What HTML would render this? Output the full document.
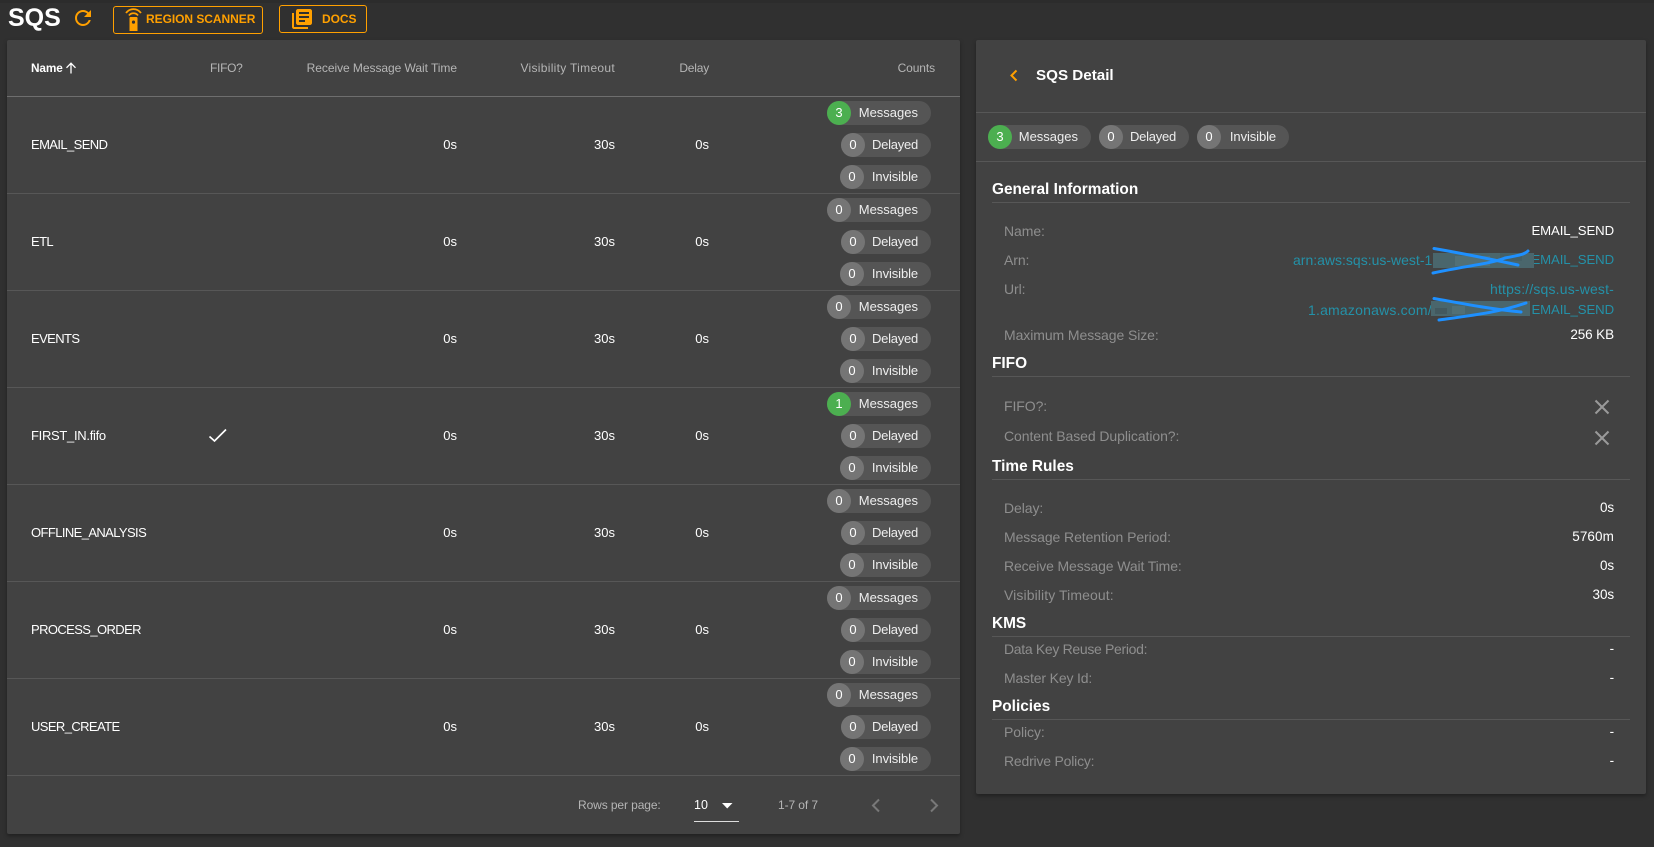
<!DOCTYPE html>
<html><head><meta charset="utf-8"><title>SQS</title>
<style>
html,body{margin:0;padding:0;background:#303030;width:1654px;height:847px;overflow:hidden;font-family:"Liberation Sans",Arial,sans-serif;color:#fff}
.p{position:absolute;background:#424242;border-radius:2px;box-shadow:0 2px 4px rgba(0,0,0,.35)}
.t{position:absolute;white-space:nowrap;line-height:20px;height:20px;font-size:13px}
.h{font-size:12px;color:#b5b5b5;letter-spacing:-.1px}
.n{letter-spacing:-.6px}
.l{font-size:14px;color:#8e8e8e;letter-spacing:-.08px}
.v{font-size:13.5px;letter-spacing:-.1px}
.a{color:#2491a8;font-size:14px;letter-spacing:-.1px}
.s{font-size:15.4px;font-weight:bold}
.d{position:absolute;height:1px;background:#575757}
.c{position:absolute;height:24px;border-radius:12px;background:#555;font-size:13px;line-height:24px}
.c i{position:absolute;left:0;top:0;width:24px;height:24px;border-radius:12px;background:#757575;font-style:normal;text-align:center}
.c i.g{background:#4caf50}
.c b{position:absolute;right:13px;top:0;font-weight:normal;color:#eee}
.c b.y{letter-spacing:-.25px}
.c b.z{letter-spacing:-.1px}
.btn{position:absolute;border:1px solid #ffa000;border-radius:3px;box-sizing:border-box}
.o{color:#ffa000;font-size:12px;font-weight:bold;letter-spacing:-.05px}
.r{position:absolute}
svg{position:absolute;overflow:visible}
</style></head><body>
<div style="position:absolute;left:0;top:0;width:1654px;height:3px;background:#2c2c2c"></div>
<div class="t" style="left:8px;top:3px;font-size:25px;line-height:30px;height:30px;font-weight:bold">SQS</div>
<svg style="left:71px;top:6px" width="24" height="24" viewBox="0 0 24 24"><path fill="#ffa000" d="M17.65 6.35C16.2 4.9 14.21 4 12 4c-4.42 0-7.99 3.58-7.99 8s3.57 8 7.99 8c3.73 0 6.84-2.55 7.73-6h-2.08c-.82 2.33-3.04 4-5.65 4-3.31 0-6-2.69-6-6s2.69-6 6-6c1.66 0 3.14.69 4.22 1.78L13 11h7V4l-2.35 2.35z"/></svg>
<div class="btn" style="left:113px;top:6px;width:150px;height:28px"></div>
<svg style="left:110px;top:0" width="60" height="40" viewBox="0 0 60 40"><path fill="none" stroke="#ffa000" stroke-width="1.8" d="M16 13C20 7.800 27 7.800 31 13"/><path fill="none" stroke="#ffa000" stroke-width="1.8" d="M19 15.500C21 12.500 26 12.500 28 15.500"/><path fill="#ffa000" fill-rule="evenodd" d="M20.500 17h6a1 1 0 0 1 1 1v13h-8V18a1 1 0 0 1 1-1zm3 3.500a1.600 1.600 0 1 0 0 3.200 1.600 1.600 0 0 0 0-3.200z"/></svg>
<div class="t o" style="left:146px;top:9px">REGION SCANNER</div>
<div class="btn" style="left:279px;top:5px;width:88px;height:28px"></div>
<svg style="left:290px;top:7px" width="24" height="24" viewBox="0 0 24 24"><path fill="#ffa000" d="M4 6H2v14c0 1.100.9 2 2 2h14v-2H4V6zm16-4H8c-1.100 0-2 .9-2 2v12c0 1.100.9 2 2 2h12c1.100 0 2-.9 2-2V4c0-1.100-.9-2-2-2zm-1 9H9V9h10v2zm-4 4H9v-2h6v2zm4-8H9V5h10v2z"/></svg>
<div class="t o" style="left:322px;top:9px">DOCS</div>

<!-- left panel -->
<div class="p" style="left:7px;top:40px;width:953px;height:794px"></div>
<div class="t h" style="left:31px;top:58px;color:#fff;font-weight:bold;font-size:11.8px">Name</div>
<svg style="left:65px;top:61px" width="12" height="14" viewBox="0 0 12 14"><path fill="none" stroke="#fff" stroke-width="1.300" d="M6 12.500V2.500M1.500 6.800 6 2.200l4.500 4.600"/></svg>
<div class="t h" style="left:210px;top:58px;letter-spacing:-.3px">FIFO?</div>
<div class="t h" style="right:1197px;top:58px;letter-spacing:-.05px">Receive Message Wait Time</div>
<div class="t h" style="right:1039px;top:58px;letter-spacing:.3px">Visibility Timeout</div>
<div class="t h" style="right:945px;top:58px;letter-spacing:-.2px">Delay</div>
<div class="t h" style="right:719px;top:58px">Counts</div>
<div class="d" style="left:7px;top:96px;width:953px;background:#6e6e6e"></div>
<div class="d" style="left:7px;top:193px;width:953px"></div>
<div class="d" style="left:7px;top:290px;width:953px"></div>
<div class="d" style="left:7px;top:387px;width:953px"></div>
<div class="d" style="left:7px;top:484px;width:953px"></div>
<div class="d" style="left:7px;top:581px;width:953px"></div>
<div class="d" style="left:7px;top:678px;width:953px"></div>
<div class="d" style="left:7px;top:775px;width:953px"></div>

<div class="t n" style="left:31px;top:135px">EMAIL_SEND</div>
<div class="t n" style="left:31px;top:232px">ETL</div>
<div class="t n" style="left:31px;top:329px">EVENTS</div>
<div class="t n" style="left:31px;top:426px;letter-spacing:-.3px">FIRST_IN.fifo</div>
<div class="t n" style="left:31px;top:523px">OFFLINE_ANALYSIS</div>
<div class="t n" style="left:31px;top:620px">PROCESS_ORDER</div>
<div class="t n" style="left:31px;top:717px">USER_CREATE</div>
<svg style="left:207px;top:427px" width="22" height="18" viewBox="0 0 22 18"><path fill="none" stroke="#fff" stroke-width="1.700" d="M2.500 9.500 7.500 14 19 2.500"/></svg>

<div class="t" style="right:1197px;top:135px">0s</div><div class="t" style="right:1039px;top:135px">30s</div><div class="t" style="right:945px;top:135px">0s</div>
<div class="t" style="right:1197px;top:232px">0s</div><div class="t" style="right:1039px;top:232px">30s</div><div class="t" style="right:945px;top:232px">0s</div>
<div class="t" style="right:1197px;top:329px">0s</div><div class="t" style="right:1039px;top:329px">30s</div><div class="t" style="right:945px;top:329px">0s</div>
<div class="t" style="right:1197px;top:426px">0s</div><div class="t" style="right:1039px;top:426px">30s</div><div class="t" style="right:945px;top:426px">0s</div>
<div class="t" style="right:1197px;top:523px">0s</div><div class="t" style="right:1039px;top:523px">30s</div><div class="t" style="right:945px;top:523px">0s</div>
<div class="t" style="right:1197px;top:620px">0s</div><div class="t" style="right:1039px;top:620px">30s</div><div class="t" style="right:945px;top:620px">0s</div>
<div class="t" style="right:1197px;top:717px">0s</div><div class="t" style="right:1039px;top:717px">30s</div><div class="t" style="right:945px;top:717px">0s</div>

<div class="c" style="left:827px;top:101px;width:104px"><i class="g">3</i><b>Messages</b></div>
<div class="c" style="left:841px;top:133px;width:90px"><i>0</i><b class="y">Delayed</b></div>
<div class="c" style="left:840px;top:165px;width:91px"><i>0</i><b class="z">Invisible</b></div>
<div class="c" style="left:827px;top:198px;width:104px"><i>0</i><b>Messages</b></div>
<div class="c" style="left:841px;top:230px;width:90px"><i>0</i><b class="y">Delayed</b></div>
<div class="c" style="left:840px;top:262px;width:91px"><i>0</i><b class="z">Invisible</b></div>
<div class="c" style="left:827px;top:295px;width:104px"><i>0</i><b>Messages</b></div>
<div class="c" style="left:841px;top:327px;width:90px"><i>0</i><b class="y">Delayed</b></div>
<div class="c" style="left:840px;top:359px;width:91px"><i>0</i><b class="z">Invisible</b></div>
<div class="c" style="left:827px;top:392px;width:104px"><i class="g">1</i><b>Messages</b></div>
<div class="c" style="left:841px;top:424px;width:90px"><i>0</i><b class="y">Delayed</b></div>
<div class="c" style="left:840px;top:456px;width:91px"><i>0</i><b class="z">Invisible</b></div>
<div class="c" style="left:827px;top:489px;width:104px"><i>0</i><b>Messages</b></div>
<div class="c" style="left:841px;top:521px;width:90px"><i>0</i><b class="y">Delayed</b></div>
<div class="c" style="left:840px;top:553px;width:91px"><i>0</i><b class="z">Invisible</b></div>
<div class="c" style="left:827px;top:586px;width:104px"><i>0</i><b>Messages</b></div>
<div class="c" style="left:841px;top:618px;width:90px"><i>0</i><b class="y">Delayed</b></div>
<div class="c" style="left:840px;top:650px;width:91px"><i>0</i><b class="z">Invisible</b></div>
<div class="c" style="left:827px;top:683px;width:104px"><i>0</i><b>Messages</b></div>
<div class="c" style="left:841px;top:715px;width:90px"><i>0</i><b class="y">Delayed</b></div>
<div class="c" style="left:840px;top:747px;width:91px"><i>0</i><b class="z">Invisible</b></div>

<div class="t h" style="left:578px;top:795px">Rows per page:</div>
<div class="t" style="left:694px;top:795px;font-size:12.5px">10</div>
<svg style="left:722px;top:803px" width="11" height="6" viewBox="0 0 11 6"><path fill="#fff" d="M0 0h10.500L5.200 5.500z"/></svg>
<div class="d" style="left:694px;top:821px;width:45px;background:#ddd"></div>
<div class="t h" style="left:778px;top:795px">1-7 of 7</div>
<svg style="left:870px;top:797px" width="12" height="17" viewBox="0 0 12 17"><path fill="none" stroke="#787878" stroke-width="2" d="M9 2.500 3 8.500l6 6"/></svg>
<svg style="left:928px;top:797px" width="12" height="17" viewBox="0 0 12 17"><path fill="none" stroke="#787878" stroke-width="2" d="M3 2.500l6 6-6 6"/></svg>

<!-- right panel -->
<div class="p" style="left:976px;top:40px;width:670px;height:754px"></div>
<svg style="left:1007px;top:67px" width="14" height="16" viewBox="0 0 14 16"><path fill="none" stroke="#ffa000" stroke-width="2" d="M9.500 3.500 4.500 8.500l5 5"/></svg>
<div class="t" style="left:1036px;top:66px;font-size:15.2px;font-weight:bold">SQS Detail</div>
<div class="d" style="left:976px;top:112px;width:670px"></div>
<div class="c" style="left:988px;top:125px;width:103px"><i class="g">3</i><b>Messages</b></div>
<div class="c" style="left:1099px;top:125px;width:90px"><i>0</i><b class="y">Delayed</b></div>
<div class="c" style="left:1197px;top:125px;width:92px"><i>0</i><b class="z">Invisible</b></div>
<div class="d" style="left:976px;top:161px;width:670px"></div>

<div class="t s" style="left:992px;top:180px">General Information</div>
<div class="d" style="left:992px;top:202px;width:638px"></div>
<div class="t l" style="left:1004px;top:221px">Name:</div>
<div class="t v" style="right:40px;top:221px;font-size:13.2px;letter-spacing:-.1px">EMAIL_SEND</div>
<div class="t l" style="left:1004px;top:250px">Arn:</div>
<div class="t a" style="left:1293px;top:250px;letter-spacing:0">arn:aws:sqs:us-west-1:</div>
<div class="t a" style="right:40px;top:250px;font-size:13.2px">EMAIL_SEND</div>
<div class="t l" style="left:1004px;top:279px">Url:</div>
<div class="t a" style="right:40px;top:279px;letter-spacing:.17px">https://sqs.us-west-</div>
<div class="t a" style="left:1308px;top:300px;letter-spacing:.2px">1.amazonaws.com/</div>
<div class="t a" style="right:40px;top:300px;font-size:13.2px">EMAIL_SEND</div>
<div class="r" style="left:1433px;top:253px;width:101px;height:15px;background:#4a666c"></div>
<div class="r" style="left:1455px;top:256px;width:35px;height:10px;background:#527076"></div>
<div class="r" style="left:1500px;top:253px;width:22px;height:8px;background:#456066"></div>
<div class="r" style="left:1431px;top:301px;width:99px;height:15px;background:#4a666c"></div>
<div class="r" style="left:1435px;top:308px;width:12px;height:6px;background:#43595f"></div>
<div class="r" style="left:1452px;top:306px;width:13px;height:8px;background:#527076"></div>
<div class="t l" style="left:1004px;top:325px">Maximum Message Size:</div>
<div class="t v" style="right:40px;top:325px">256 KB</div>
<svg style="left:0;top:0" width="1654" height="847" viewBox="0 0 1654 847"><g fill="none" stroke="#1e90ff" stroke-width="3" stroke-linecap="round"><path d="M1434 248.500C1460 253 1490 259 1518 265"/><path d="M1433 273C1465 266 1490 264 1505 258C1515 256 1524 255 1528 251"/><path d="M1434 298.500C1465 304 1490 309 1521 312"/><path d="M1439 320C1475 315 1500 312 1526 303"/></g></svg>

<div class="t s" style="left:992px;top:354px">FIFO</div>
<div class="d" style="left:992px;top:376px;width:638px"></div>
<div class="t l" style="left:1004px;top:396px">FIFO?:</div>
<svg style="left:1594px;top:399px" width="16" height="16" viewBox="0 0 16 16"><path stroke="#9a9a9a" stroke-width="2" d="M1.500 1.500 14.500 14.500M14.500 1.500 1.500 14.500"/></svg>
<div class="t l" style="left:1004px;top:426px">Content Based Duplication?:</div>
<svg style="left:1594px;top:430px" width="16" height="16" viewBox="0 0 16 16"><path stroke="#9a9a9a" stroke-width="2" d="M1.500 1.500 14.500 14.500M14.500 1.500 1.500 14.500"/></svg>

<div class="t s" style="left:992px;top:457px">Time Rules</div>
<div class="d" style="left:992px;top:479px;width:638px"></div>
<div class="t l" style="left:1004px;top:498px">Delay:</div><div class="t v" style="right:40px;top:498px">0s</div>
<div class="t l" style="left:1004px;top:527px">Message Retention Period:</div><div class="t v" style="right:40px;top:527px;letter-spacing:.1px">5760m</div>
<div class="t l" style="left:1004px;top:556px;letter-spacing:-.12px">Receive Message Wait Time:</div><div class="t v" style="right:40px;top:556px">0s</div>
<div class="t l" style="left:1004px;top:585px;letter-spacing:.1px">Visibility Timeout:</div><div class="t v" style="right:40px;top:585px">30s</div>

<div class="t s" style="left:992px;top:614px">KMS</div>
<div class="d" style="left:992px;top:636px;width:638px"></div>
<div class="t l" style="left:1004px;top:639px;letter-spacing:-.32px">Data Key Reuse Period:</div><div class="t v" style="right:40px;top:639px">-</div>
<div class="t l" style="left:1004px;top:668px;letter-spacing:-.15px">Master Key Id:</div><div class="t v" style="right:40px;top:668px">-</div>

<div class="t s" style="left:992px;top:697px">Policies</div>
<div class="d" style="left:992px;top:719px;width:638px"></div>
<div class="t l" style="left:1004px;top:722px">Policy:</div><div class="t v" style="right:40px;top:722px">-</div>
<div class="t l" style="left:1004px;top:751px;letter-spacing:-.2px">Redrive Policy:</div><div class="t v" style="right:40px;top:751px">-</div>
</body></html>
